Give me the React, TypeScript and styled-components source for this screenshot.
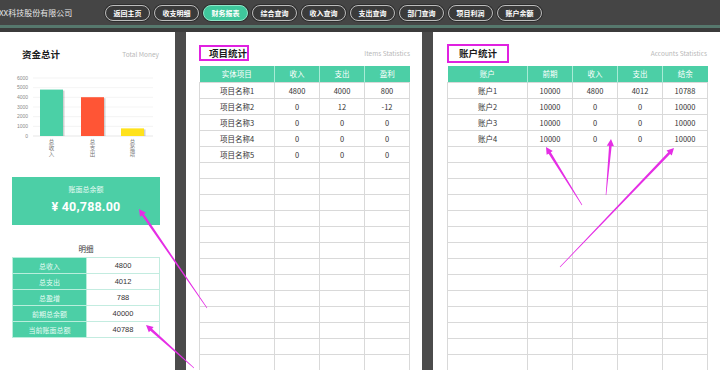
import React from "react";
import styled, { createGlobalStyle } from "styled-components";

const GlobalStyle = createGlobalStyle`
  html, body { margin: 0; padding: 0; }
  body {
    background: #4b4b4b;
    font-family: "Noto Sans CJK SC", "Noto Sans", "Liberation Sans", sans-serif;
    overflow: hidden;
  }
  * { box-sizing: border-box; }
`;

const Page = styled.div`
  position: relative;
  width: 720px;
  height: 370px;
  overflow: hidden;
  background: #4b4b4b;
  display: flex;
  flex-direction: column;
`;

const Header = styled.header`
  height: 25px;
  background: #454545;
  display: flex;
  align-items: center;
  flex: none;
`;

const Brand = styled.div`
  width: 106px;
  margin-left: -1px;
  color: #e8e8e8;
  font-size: 8px;
  white-space: nowrap;
`;

const Nav = styled.nav`
  display: flex;
  gap: 4px;
  margin-top: 1px;
`;

const Pill = styled.div<{ $active?: boolean }>`
  width: 45px;
  height: 16px;
  border-radius: 9px;
  border: 1px solid ${(p) => (p.$active ? "#8fe6c9" : "#bdbdbd")};
  background: ${(p) => (p.$active ? "#3fc79c" : "#3a3a3a")};
  color: #fff;
  font-size: 7px;
  font-weight: 700;
  display: flex;
  align-items: center;
  justify-content: center;
  box-shadow: 0 0 0 1px #2e2e2e;
`;

const Divider = styled.div`
  height: 3px;
  background: #56786d;
  flex: none;
`;

const Band = styled.div`
  height: 4px;
  background: #3b3b3b;
  flex: none;
`;

const Main = styled.main`
  flex: 1;
  min-height: 0;
  display: grid;
  grid-template-columns: 175px 236px 287px;
  justify-content: space-between;
`;

const Panel = styled.section<{ $pad: string }>`
  background: #fff;
  padding: ${(p) => p.$pad};
  overflow: hidden;
  display: flex;
  flex-direction: column;
`;

const TitleRow = styled.div<{ $h: number; $pad?: string }>`
  height: ${(p) => p.$h}px;
  padding: ${(p) => p.$pad || "0"};
  display: flex;
  align-items: center;
  justify-content: space-between;
  flex: none;
`;

const Title = styled.h2<{ $boxW?: number; $boxH?: number; $padL?: number }>`
  margin: 0;
  font-size: 9.5px;
  font-weight: 700;
  color: #1a1a1a;
  white-space: nowrap;
  display: flex;
  align-items: center;
  ${(p) =>
    p.$boxW
      ? `width: ${p.$boxW}px; height: ${p.$boxH}px; border: 2px solid #e021e0; padding-left: ${p.$padL}px;`
      : ""}
`;

const SubTitle = styled.span`
  font-size: 6.5px;
  color: #b8b8b8;
  white-space: nowrap;
`;

const ChartBox = styled.div`
  margin-top: 10px;
  height: 92px;
  flex: none;
`;

const BalanceCard = styled.div`
  margin: 15px 15px 0 12px;
  height: 48px;
  background: #4ccfa6;
  color: #fff;
  display: flex;
  flex-direction: column;
  align-items: center;
  flex: none;
`;

const BalanceLabel = styled.div`
  font-size: 7px;
  color: #e9fbf5;
  margin-top: 7px;
  line-height: 10px;
`;

const BalanceValue = styled.div`
  font-family: "Roboto", "Noto Sans", sans-serif;
  font-size: 12.5px;
  font-weight: 700;
  margin-top: 5px;
  line-height: 16px;
  letter-spacing: 0.2px;
`;

const DetailCaption = styled.div`
  margin: 18px 15px 0 12px;
  font-size: 7.5px;
  color: #333;
  line-height: 12px;
  text-align: center;
  flex: none;
`;

const DetailTable = styled.table`
  margin: 2px 15px 0 12px;
  width: 148px;
  border-collapse: collapse;
  table-layout: fixed;
  flex: none;
`;

const DetailKey = styled.td`
  width: 74px;
  height: 16px;
  padding: 0;
  background: #4ccfa6;
  color: #e6fbf4;
  font-size: 7px;
  text-align: center;
  border: 1px solid #b9eedc;
`;

const DetailVal = styled.td`
  height: 16px;
  padding: 0;
  background: #fff;
  color: #333;
  font-family: "Liberation Sans", sans-serif;
  font-size: 7.5px;
  text-align: center;
  border: 1px solid #c3ece0;
`;

const DataTable = styled.table<{ $mt: number }>`
  margin-top: ${(p) => p.$mt}px;
  width: 100%;
  border-collapse: collapse;
  table-layout: fixed;
  flex: none;
`;

const Col = styled.col<{ $w: number }>`
  width: ${(p) => p.$w}px;
`;

const Th = styled.th`
  height: 16px;
  padding: 0;
  background: #4ccfa6;
  color: #fff;
  font-size: 7.5px;
  font-weight: 400;
  text-align: center;
  border-left: 1px solid #a8ebd6;
  &:first-child { border-left: none; }
`;

const Td = styled.td`
  height: 16px;
  padding: 0;
  color: #333;
  font-size: 7.5px;
  text-align: center;
  border: 1px solid #d9d9d9;
  white-space: nowrap;
`;

const AxisLabel = styled.text`
  writing-mode: vertical-rl;
  font-family: "Noto Sans CJK SC", sans-serif;
  font-size: 5.5px;
  letter-spacing: 0.6px;
  fill: #777;
`;

const Overlay = styled.svg`
  position: absolute;
  left: 0;
  top: 0;
  pointer-events: none;
`;

const navItems = ["返回主页", "收支明细", "财务报表", "综合查询", "收入查询", "支出查询", "部门查询", "项目利润", "账户余额"];

const projectRows = [
  ["项目名称1", "4800", "4000", "800"],
  ["项目名称2", "0", "12", "-12"],
  ["项目名称3", "0", "0", "0"],
  ["项目名称4", "0", "0", "0"],
  ["项目名称5", "0", "0", "0"],
];

const accountRows = [
  ["账户1", "10000", "4800", "4012", "10788"],
  ["账户2", "10000", "0", "0", "10000"],
  ["账户3", "10000", "0", "0", "10000"],
  ["账户4", "10000", "0", "0", "10000"],
];

const details = [
  ["总收入", "4800"],
  ["总支出", "4012"],
  ["总盈增", "788"],
  ["前期总余额", "40000"],
  ["当前账面总额", "40788"],
];

const bars = [
  { label: "总收入", value: 4800, color: "#4bd0a6", x: 40 },
  { label: "总支出", value: 4012, color: "#ff5535", x: 81 },
  { label: "总盈增", value: 788, color: "#ffe21c", x: 121 },
];

function Chart() {
  const base = 66;
  const per = 9.67 / 1000;
  return (
    <svg width="175" height="92" viewBox="0 0 175 92">
      {[0, 1000, 2000, 3000, 4000, 5000, 6000].map((v) => {
        const y = base - v * per;
        return (
          <g key={v}>
            <line x1="33" x2="153" y1={y} y2={y} stroke={v === 0 ? "#dcdcdc" : "#efefef"} strokeWidth="0.7" />
            <text x="28" y={y + 1.8} fontSize="5" fill="#8a8a8a" textAnchor="end" fontFamily="Liberation Sans, sans-serif">
              {v}
            </text>
          </g>
        );
      })}
      {bars.map((b) => {
        const h = b.value * per;
        return (
          <g key={b.label}>
            <rect x={b.x + 1.5} y={base - h + 1} width="23" height={h - 1} fill="#000" opacity="0.18" />
            <rect x={b.x} y={base - h} width="23" height={h} fill={b.color} />
            <AxisLabel x={b.x + 11.5} y={69}>
              {b.label}
            </AxisLabel>
          </g>
        );
      })}
    </svg>
  );
}

type Pt = [number, number];

function arrowPoints(t: Pt, h: Pt) {
  const dx = h[0] - t[0];
  const dy = h[1] - t[1];
  const len = Math.hypot(dx, dy);
  const ux = dx / len;
  const uy = dy / len;
  const nx = -uy;
  const ny = ux;
  const headLen = 7;
  const bx = h[0] - ux * headLen;
  const by = h[1] - uy * headLen;
  const tw = 0.3;
  const sw = 1.3;
  const hw = 3.6;
  const pts: Pt[] = [
    [t[0] + nx * tw, t[1] + ny * tw],
    [bx + nx * sw, by + ny * sw],
    [bx + nx * hw, by + ny * hw],
    [h[0], h[1]],
    [bx - nx * hw, by - ny * hw],
    [bx - nx * sw, by - ny * sw],
    [t[0] - nx * tw, t[1] - ny * tw],
  ];
  return pts.map((p) => p.join(",")).join(" ");
}

const arrows: [Pt, Pt][] = [
  [[207, 308], [139, 209]],
  [[194, 368], [146, 325]],
  [[582, 205], [546, 147]],
  [[606, 195], [611, 139]],
  [[560, 267], [674, 148]],
];

export default function App() {
  const emptyProject = Array.from({ length: 18 });
  const emptyAccount = Array.from({ length: 18 });
  return (
    <>
      <GlobalStyle />
      <Page>
        <Header>
          <Brand>XX科技股份有限公司</Brand>
          <Nav>
            {navItems.map((n) => (
              <Pill key={n} $active={n === "财务报表"}>
                {n}
              </Pill>
            ))}
          </Nav>
        </Header>
        <Divider />
        <Band />
        <Main>
          <Panel $pad="16px 0 0 0">
            <TitleRow $h={12} $pad="0 16px 0 22px">
              <Title>资金总计</Title>
              <SubTitle>Total Money</SubTitle>
            </TitleRow>
            <ChartBox>
              <Chart />
            </ChartBox>
            <BalanceCard>
              <BalanceLabel>账面总余额</BalanceLabel>
              <BalanceValue>¥ 40,788.00</BalanceValue>
            </BalanceCard>
            <DetailCaption>明细</DetailCaption>
            <DetailTable>
              <tbody>
                {details.map(([k, v]) => (
                  <tr key={k}>
                    <DetailKey>{k}</DetailKey>
                    <DetailVal>{v}</DetailVal>
                  </tr>
                ))}
              </tbody>
            </DetailTable>
          </Panel>

          <Panel $pad="13px 12px 0 13px">
            <TitleRow $h={16}>
              <Title $boxW={50} $boxH={16} $padL={8}>项目统计</Title>
              <SubTitle>Items Statistics</SubTitle>
            </TitleRow>
            <DataTable $mt={5}>
              <colgroup>
                <Col $w={75} />
                <Col $w={45} />
                <Col $w={45} />
                <Col $w={45} />
              </colgroup>
              <thead>
                <tr>
                  {["实体项目", "收入", "支出", "盈利"].map((h) => (
                    <Th key={h}>{h}</Th>
                  ))}
                </tr>
              </thead>
              <tbody>
                {projectRows.map((r) => (
                  <tr key={r[0]}>
                    {r.map((c, i) => (
                      <Td key={i}>{c}</Td>
                    ))}
                  </tr>
                ))}
                {emptyProject.map((_, i) => (
                  <tr key={"e" + i}>
                    <Td />
                    <Td />
                    <Td />
                    <Td />
                  </tr>
                ))}
              </tbody>
            </DataTable>
          </Panel>

          <Panel $pad="11px 13px 0 14px">
            <TitleRow $h={20}>
              <Title $boxW={62} $boxH={19} $padL={10}>账户统计</Title>
              <SubTitle>Accounts Statistics</SubTitle>
            </TitleRow>
            <DataTable $mt={3}>
              <colgroup>
                <Col $w={80} />
                <Col $w={45} />
                <Col $w={45} />
                <Col $w={45} />
                <Col $w={45} />
              </colgroup>
              <thead>
                <tr>
                  {["账户", "前期", "收入", "支出", "结余"].map((h) => (
                    <Th key={h}>{h}</Th>
                  ))}
                </tr>
              </thead>
              <tbody>
                {accountRows.map((r) => (
                  <tr key={r[0]}>
                    {r.map((c, i) => (
                      <Td key={i}>{c}</Td>
                    ))}
                  </tr>
                ))}
                {emptyAccount.map((_, i) => (
                  <tr key={"e" + i}>
                    <Td />
                    <Td />
                    <Td />
                    <Td />
                    <Td />
                  </tr>
                ))}
              </tbody>
            </DataTable>
          </Panel>
        </Main>
        <Overlay width="720" height="370" viewBox="0 0 720 370">
          {arrows.map(([t, h], i) => (
            <polygon key={i} points={arrowPoints(t, h)} fill="#e52ee5" />
          ))}
        </Overlay>
      </Page>
    </>
  );
}
